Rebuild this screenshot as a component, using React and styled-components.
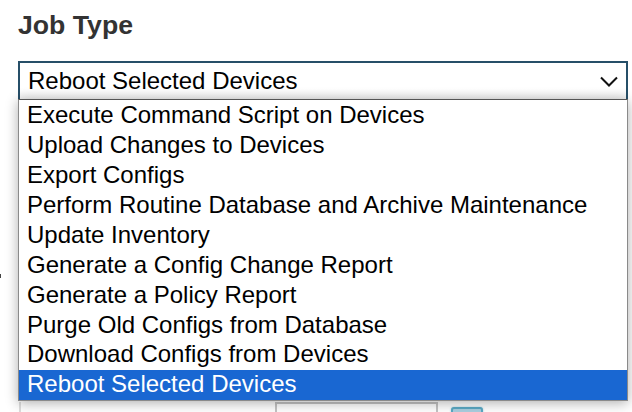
import React from "react";
import styled, { createGlobalStyle } from "styled-components";

const Global = createGlobalStyle`
  html, body { margin: 0; padding: 0; background: #fff; }
  #root { width: 632px; height: 412px; overflow: hidden; }
`;

const Page = styled.div`
  position: relative;
  width: 632px;
  height: 412px;
  overflow: hidden;
  box-sizing: border-box;
  padding: 10px 4px 0 18px;
  font-family: "Liberation Sans", Arial, sans-serif;
  background: #fff;
`;

const Title = styled.h2`
  margin: 0 0 21px;
  font-size: 26.67px;
  line-height: 30px;
  font-weight: 700;
  color: #333;
`;

const SelectBox = styled.div`
  display: flex;
  align-items: center;
  justify-content: space-between;
  box-sizing: border-box;
  height: 40px;
  padding: 0 8px 0 8px;
  border: 2px solid #264f68;
  background: linear-gradient(#fff 70%, #f1f1f1);
  font-size: 24px;
  color: #000;
`;

const Menu = styled.ul`
  position: absolute;
  left: 18px;
  top: 99px;
  width: 610px;
  box-sizing: border-box;
  margin: 0;
  padding: 0;
  list-style: none;
  background: #fff;
  border: 1px solid #8a8a8a;
  border-top-color: #555;
  box-shadow: 0 2px 12px rgba(0, 0, 0, 0.32);
  z-index: 2;
`;

const Option = styled.li`
  height: 30px;
  line-height: ${(p) => (p.$raised ? "27px" : "29px")};
  padding-left: 8px;
  font-size: 24px;
  white-space: nowrap;
  color: ${(p) => (p.$selected ? "#fff" : "#000")};
  background: ${(p) => (p.$selected ? "#1967d2" : "transparent")};
`;

const Behind = styled.div`
  display: flex;
  align-items: flex-start;
  margin: 301px 0 0 1px;
`;

const LeftEdge = styled.div`
  width: 2px;
  height: 20px;
  margin-right: 254px;
  background: #ddd;
`;

const HiddenInput = styled.div`
  width: 163px;
  height: 20px;
  margin-right: 13px;
  box-sizing: border-box;
  border: 2px solid #c4c4c4;
  background: #fff;
`;

const CalendarButton = styled.div`
  width: 32px;
  height: 20px;
  margin-top: 5px;
  box-sizing: border-box;
  border: 2px solid #5aa9c4;
  border-radius: 3px 3px 0 0;
  background: #a9cfe0;
  box-shadow: 0 0 2px rgba(90, 169, 196, 0.6);
`;

const EdgeSpeck = styled.div`
  position: absolute;
  left: 0;
  top: 274px;
  width: 1px;
  height: 4px;
  background: #444;
`;

const options = [
  "Execute Command Script on Devices",
  "Upload Changes to Devices",
  "Export Configs",
  "Perform Routine Database and Archive Maintenance",
  "Update Inventory",
  "Generate a Config Change Report",
  "Generate a Policy Report",
  "Purge Old Configs from Database",
  "Download Configs from Devices",
  "Reboot Selected Devices",
];

export default function App() {
  return (
    <Page>
      <Global />
      <EdgeSpeck />
      <Title>Job Type</Title>
      <SelectBox>
        <span>Reboot Selected Devices</span>
        <svg width="18" height="11" viewBox="0 0 18 11" fill="none" stroke="#111" strokeWidth="2">
          <path d="M1 1.5l8 8 8-8" />
        </svg>
      </SelectBox>
      <Menu>
        {options.map((o, i) => (
          <Option key={o} $raised={i >= 8} $selected={i === options.length - 1}>{o}</Option>
        ))}
      </Menu>
      <Behind>
        <LeftEdge />
        <HiddenInput />
        <CalendarButton />
      </Behind>
    </Page>
  );
}
